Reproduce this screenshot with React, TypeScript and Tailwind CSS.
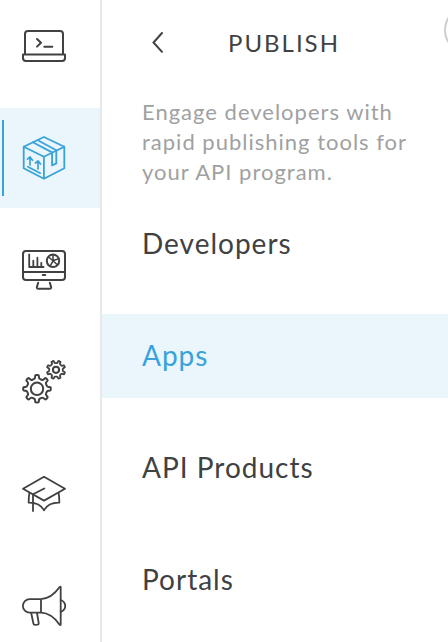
import type { ReactNode } from 'react';

// Outline of a gear whose tooth corners are rounded with quadratic curves.
function gearPath(cx: number, cy: number, outer: number, root: number, teeth: number, offset: number) {
  const step = (Math.PI * 2) / teeth;
  const corners: [number, number][] = [];
  const profile: [number, number][] = [
    [root, -0.24],
    [outer, -0.17],
    [outer, 0.17],
    [root, 0.24],
  ];
  for (let i = 0; i < teeth; i++) {
    for (const [r, t] of profile) {
      const angle = (i + t) * step + offset;
      corners.push([cx + r * Math.cos(angle), cy + r * Math.sin(angle)]);
    }
  }
  const mix = (a: [number, number], b: [number, number], k: number) =>
    `${(a[0] + (b[0] - a[0]) * k).toFixed(2)} ${(a[1] + (b[1] - a[1]) * k).toFixed(2)}`;
  const segments = corners.map((corner, i) => {
    const prev = corners[(i + corners.length - 1) % corners.length];
    const next = corners[(i + 1) % corners.length];
    return `${i ? 'L' : 'M'}${mix(corner, prev, 0.3)}Q${mix(corner, corner, 0)} ${mix(corner, next, 0.3)}`;
  });
  return `${segments.join('')}Z`;
}

function Icon({ children }: { children: ReactNode }) {
  return (
    <svg
      width="44"
      height="44"
      viewBox="0 0 44 44"
      fill="none"
      stroke="currentColor"
      strokeWidth="2"
      strokeLinecap="round"
      strokeLinejoin="round"
    >
      {children}
    </svg>
  );
}

const LaptopIcon = () => (
  <Icon>
    <path d="M3 30V10a3 3 0 0 1 3-3h32a3 3 0 0 1 3 3v20" />
    <path d="M1 30.5h42V34a3 3 0 0 1-3 3H4a3 3 0 0 1-3-3z" />
    <path d="M15 15l4 3.8-4 3.8M22.3 22.8h8" />
  </Icon>
);

const BoxIcon = () => (
  <Icon>
    <path strokeWidth="1.8" d="M21.9 1L42.3 10.7v21.6L21.9 42.8 1.7 32.3V10.7zM1.7 10.7l20.2 10 20.4-10M21.9 20.7v22" />
    <path strokeWidth="1.8" d="M10.8 6.2L30.1 16.4v13l4.2-2V14.2L15.8 4.2" />
    <path strokeWidth="1.7" d="M8 29V21.3M5.5 23.2L8 20.9l2.5 3.3M16 33V25.2M13.5 27L16 24.8l2.5 3.3M5.9 30.7l12.4 6.5" />
  </Icon>
);

const MonitorIcon = () => (
  <Icon>
    <rect x="1" y="3" width="42" height="29" rx="3" />
    <path d="M1 24h42M20.8 27h2.4M16.2 34.7l-1.3 4.2q-.4 1.8 1.4 1.8h11.4q1.8 0 1.4-1.8l-1.3-4.2" />
    <path strokeWidth="1.8" d="M7.2 6.5V19h14.3M11.3 19v-6.300M15.400 19V9.700M19.300 19v-4.200" />
    <circle cx="31" cy="12.800" r="6.200" />
    <path strokeWidth="1.5" d="M31 12.800V6.800M31 12.800l5.800-2.200M31 12.800l-2.800 5.400M31 12.800l4.300 3.900M31 12.800l-4.200-3.600" />
  </Icon>
);

const GearsIcon = () => (
  <Icon>
    <path d={gearPath(15, 28.8, 13.9, 10.4, 8, 0)} />
    <circle cx="15" cy="28.8" r="6.2" />
    <path strokeWidth="1.8" d={gearPath(34, 9.8, 9.3, 6.9, 8, Math.PI / 8)} />
    <circle cx="34" cy="9.8" r="3.1" />
  </Icon>
);

const CapIcon = () => (
  <Icon>
    <path strokeWidth="1.8" d="M22 4.8l21 11.9-21 11.9L1 16.7z" />
    <path strokeWidth="1.8" d="M22.3 16.5L11 22.3V39" />
    <path strokeWidth="1.8" d="M7.4 20.8q-.8 4.5-.7 9.9Q17.5 30.4 22 38.3q4.5-7.9 15.3-7.6.1-5.4-.7-9.9" />
  </Icon>
);

const MegaphoneIcon = () => (
  <Icon>
    <path strokeWidth="1.8" d="M19 15.1H7.7a6.8 6.8 0 0 0 0 13.6H19zM19 15.1Q29.5 14.7 37.6 3.1q1.1-1.1 1.1.4v37q0 1.3-1.1.2Q29.5 29.1 19 28.7" />
    <path strokeWidth="1.8" d="M38.7 16c6 2.2 6 9.6 0 11.8M9.2 29l2.2 10.5q.3 1.4 1.7 1.3l2.3-.2q1.5-.2 1.3-1.6L15 29" />
  </Icon>
);

const sections = [
  { name: 'Develop', icon: LaptopIcon },
  { name: 'Publish', icon: BoxIcon },
  { name: 'Analyze', icon: MonitorIcon },
  { name: 'Admin', icon: GearsIcon },
  { name: 'Learn', icon: CapIcon },
  { name: 'News', icon: MegaphoneIcon },
];

const links = ['Developers', 'Apps', 'API Products', 'Portals'];

export default function App() {
  return (
    <div className="flex h-[642px] w-[448px] overflow-hidden bg-white font-['Lato',sans-serif] text-[#404142]">
      <nav className="w-[102px] shrink-0 border-r-2 border-[#e8e8e8]">
        <ul className="-mt-1 flex flex-col gap-3">
          {sections.map(({ name, icon: SectionIcon }) => {
            const active = name === 'Publish';
            return (
              <li
                key={name}
                className={`flex h-[100px] items-center ${active ? 'bg-[#eaf5fc] text-[#38a3da]' : ''}`}
              >
                <span className={`ml-0.5 mr-[18px] h-[76px] w-0.5 ${active ? 'bg-[#38a3da]' : ''}`} />
                <SectionIcon />
              </li>
            );
          })}
        </ul>
      </nav>
      <main className="min-w-0 flex-1">
        <header className="flex h-[86px] items-start overflow-hidden">
          <svg
            className="ml-[48px] mt-[30px] shrink-0"
            width="16"
            height="26"
            viewBox="0 0 16 26"
            fill="none"
            stroke="currentColor"
            strokeWidth="2"
            strokeLinecap="round"
          >
            <path d="M12 3L3.5 12.500l8.500 9.300" />
          </svg>
          <h1 className="ml-[62px] mt-[28px] w-[216px] shrink-0 text-2xl leading-[30px] tracking-[2px]">PUBLISH</h1>
          <span className="mt-[6px] size-12 shrink-0 rounded-full border-2 border-[#cfcfcf]" />
        </header>
        <p className="ml-10 mt-[11px] whitespace-pre-line text-[22px] leading-[30px] tracking-[1px] text-[#a0a1a1]">
          {'Engage developers with\nrapid publishing tools for\nyour API program.'}
        </p>
        <ul className="mt-[15px] flex flex-col gap-7">
          {links.map((label) => (
            <li
              key={label}
              className={`flex h-[84px] items-center pb-0.5 pl-10 text-[28px] leading-9 tracking-[1px] ${
                label === 'Apps' ? 'bg-[#eaf5fc] text-[#38a3da]' : ''
              }`}
            >
              {label}
            </li>
          ))}
        </ul>
      </main>
    </div>
  );
}
